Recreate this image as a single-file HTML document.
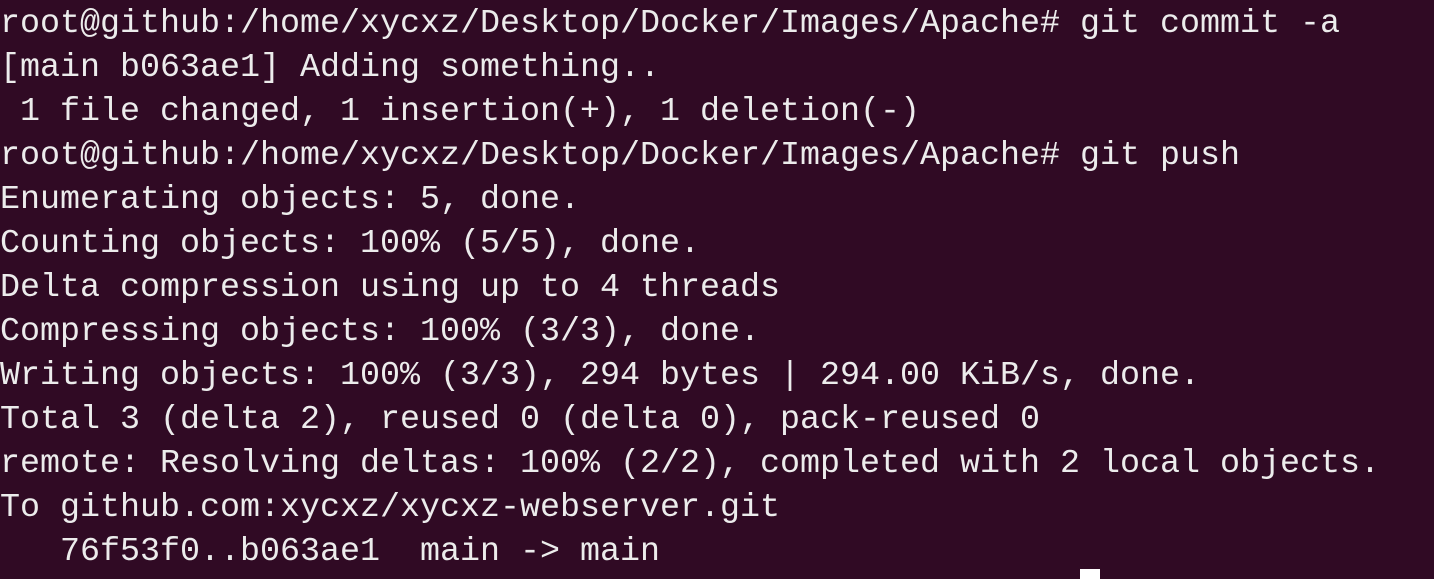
<!DOCTYPE html>
<html><head><meta charset="utf-8"><style>
html,body{margin:0;padding:0;}
body{width:1434px;height:576px;background:#300a24;overflow:hidden;position:relative;}
pre{margin:0;position:absolute;left:0;top:2px;font-family:"Liberation Mono","DejaVu Sans Mono",monospace;font-size:33.33px;line-height:44px;color:#ececec;letter-spacing:0;}
.cur{position:absolute;left:1080px;top:569px;width:20px;height:10px;background:#fff;}
</style></head><body>
<pre>root@github:/home/xycxz/Desktop/Docker/Images/Apache# git commit -a
[main b063ae1] Adding something..
 1 file changed, 1 insertion(+), 1 deletion(-)
root@github:/home/xycxz/Desktop/Docker/Images/Apache# git push
Enumerating objects: 5, done.
Counting objects: 100% (5/5), done.
Delta compression using up to 4 threads
Compressing objects: 100% (3/3), done.
Writing objects: 100% (3/3), 294 bytes | 294.00 KiB/s, done.
Total 3 (delta 2), reused 0 (delta 0), pack-reused 0
remote: Resolving deltas: 100% (2/2), completed with 2 local objects.
To github.com:xycxz/xycxz-webserver.git
   76f53f0..b063ae1  main -&gt; main</pre>
<div class="cur"></div>
</body></html>
